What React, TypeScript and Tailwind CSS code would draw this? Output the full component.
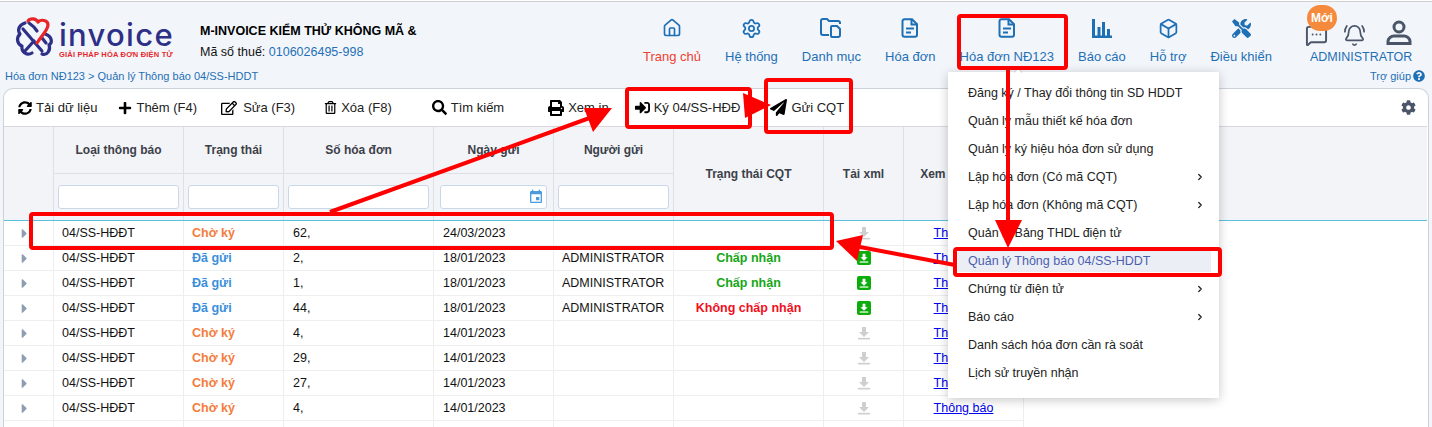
import React from "react";
import { Home, Settings, Box, MessageSquareMore, BellRing, ChevronRight } from "lucide-react";
import { FaSyncAlt, FaPlus, FaRegEdit, FaRegTrashAlt, FaSearch, FaPrint, FaSignInAlt, FaPaperPlane, FaCog, FaTools, FaQuestionCircle, FaCaretRight } from "react-icons/fa";
import { MdEvent } from "react-icons/md";

function FileIcon() {
  return (
    <svg width="18" height="20" viewBox="0 0 18 20" fill="none" stroke="currentColor" strokeWidth="2">
      <path d="M3.5 1.2h7.5l5 5v10.6a2 2 0 0 1-2 2H3.500a2 2 0 0 1-2-2V3.200a2 2 0 0 1 2-2z" />
      <path d="M10.500 1.500v5h5.200M5 10.500h8M5 14.500h5" />
    </svg>
  );
}
function FolderIcon() {
  return (
    <svg width="22" height="20" viewBox="0 0 22 20" fill="none" stroke="currentColor" strokeWidth="2">
      <path d="M9 17H3a2 2 0 0 1-2-2V3a2 2 0 0 1 2-2h4l2 2h9a2 2 0 0 1 2 2v1" />
      <path d="M12 8h5l3 3v6a2 2 0 0 1-2 2h-6a1 1 0 0 1-1-1V9a1 1 0 0 1 1-1z" />
    </svg>
  );
}
function BarsIcon() {
  return (
    <svg width="20" height="19" viewBox="0 0 20 19" fill="currentColor">
      <rect x="0" y="0" width="3" height="19" />
      <rect x="0" y="16.500" width="20" height="2.500" />
      <rect x="5.500" y="8" width="3" height="9" />
      <rect x="10" y="3" width="3" height="14" />
      <rect x="15" y="10" width="3" height="7" />
    </svg>
  );
}
function UserIcon() {
  return (
    <svg width="26" height="25" viewBox="0 0 26 25" fill="none" stroke="currentColor" strokeWidth="3">
      <circle cx="13" cy="7" r="5" />
      <path d="M2 23.500v-2c0-3 3-5.500 6-5.500h10c3 0 6 2.500 6 5.500v2z" />
    </svg>
  );
}
function DownGlyph({ size = 14 }: { size?: number }) {
  return (
    <svg width={size} height={size} viewBox="0 0 14 14" fill="currentColor">
      <path d="M5 1h4v5h3l-5 5-5-5h3z" />
      <rect x="1" y="11.800" width="12" height="1.700" />
    </svg>
  );
}
function Logo() {
  return (
    <svg width="42" height="44" viewBox="0 0 42 44" fill="none" strokeWidth="3.2" strokeLinecap="round" strokeLinejoin="round">
      <g stroke="#2e2f86">
        <path d="M10 7C4 9 2 14 5 18C1 22 2 28 7 30C6 36 12 40 17 37" />
        <path d="M8 13L27 35" />
        <path d="M19 25L9 36" />
        <path d="M14 7C17 9 20 12 22 15" />
        <path d="M30 18C37 20 38 27 34 29C36 34 32 40 27 38" />
        <path d="M27 22L31 27" />
      </g>
      <path stroke="#e8262a" d="M13 5C15 2 21 2 23 6C26 3 33 4 33 9C33 14 27 19 22 27" />
    </svg>
  );
}

const navItems = [
  { label: "Trang chủ", icon: <Home size={20} strokeWidth={2} />, labelClass: "text-[#f0402f]" },
  { label: "Hệ thống", icon: <Settings size={21} strokeWidth={2} />, labelClass: "" },
  { label: "Danh mục", icon: <FolderIcon />, labelClass: "" },
  { label: "Hóa đơn", icon: <FileIcon />, labelClass: "" },
  { label: "Hóa đơn NĐ123", icon: <FileIcon />, labelClass: "" },
  { label: "Báo cáo", icon: <BarsIcon />, labelClass: "" },
  { label: "Hỗ trợ", icon: <Box size={21} strokeWidth={2} />, labelClass: "" },
  { label: "Điều khiển", icon: <FaTools size={19} />, labelClass: "" },
];

const tools = [
  { label: "Tải dữ liệu", icon: <FaSyncAlt size={14} />, cls: "ml-[14px] gap-[4px]" },
  { label: "Thêm (F4)", icon: <FaPlus size={14} />, cls: "ml-[21px] gap-[4px]" },
  { label: "Sửa (F3)", icon: <FaRegEdit size={16} />, cls: "ml-[24px] gap-[6px]" },
  { label: "Xóa (F8)", icon: <FaRegTrashAlt size={13} />, cls: "ml-[29px] gap-[4px]" },
  { label: "Tìm kiếm", icon: <FaSearch size={15} />, cls: "ml-[40px] gap-[4px]" },
  { label: "Xem in", icon: <FaPrint size={16} />, cls: "ml-[44px] gap-[4px]" },
  { label: "Ký 04/SS-HĐĐ", icon: <FaSignInAlt size={15} />, cls: "ml-[26px] gap-[4px]" },
  { label: "Gửi CQT", icon: <FaPaperPlane size={17} />, cls: "ml-[30px] gap-[4px]" },
];

const rows = [
  ["Chờ ký", "62,", "24/03/2023", "", "", false],
  ["Đã gửi", "2,", "18/01/2023", "ADMINISTRATOR", "Chấp nhận", true],
  ["Đã gửi", "1,", "18/01/2023", "ADMINISTRATOR", "Chấp nhận", true],
  ["Đã gửi", "44,", "18/01/2023", "ADMINISTRATOR", "Không chấp nhận", true],
  ["Chờ ký", "4,", "14/01/2023", "", "", false],
  ["Chờ ký", "29,", "14/01/2023", "", "", false],
  ["Chờ ký", "27,", "14/01/2023", "", "", false],
  ["Chờ ký", "4,", "14/01/2023", "", "", false],
] as const;

const menu = [
  ["Đăng ký / Thay đổi thông tin SD HDDT", false],
  ["Quản lý mẫu thiết kế hóa đơn", false],
  ["Quản lý ký hiệu hóa đơn sử dụng", false],
  ["Lập hóa đơn (Có mã CQT)", true],
  ["Lập hóa đơn (Không mã CQT)", true],
  ["Quản lý Bảng THDL điện tử", false],
  ["Quản lý Thông báo 04/SS-HDDT", false],
  ["Chứng từ điện tử", true],
  ["Báo cáo", true],
  ["Danh sách hóa đơn cần rà soát", false],
  ["Lịch sử truyền nhận", false],
] as const;

const gridCols = "grid grid-cols-[50px_130px_100px_150px_120px_120px_150px_80px_120px_1fr]";
const headCell = "border-r border-[#dde0e6] flex items-center justify-center font-bold text-[12px] text-[#3c4048]";
const filterCell = "border-r border-[#dde0e6] flex items-center";
const inputCls = "w-full h-[24px] bg-white border border-[#c9d8e8] rounded-[3px]";
const bodyCell = "border-r border-b border-[#eeeeee] flex items-center";

export default function App() {
  return (
    <div className="relative w-[1432px] h-[427px] overflow-hidden bg-[#f2f6fb] text-[12.5px] text-[#111] font-['Liberation_Sans',Arial,sans-serif]">
      <div className="h-[1px] bg-white" />
      <div className="h-[1px] bg-[#cfcfcf]" />

      {/* Header */}
      <header className="relative h-[86px] flex">
        <div className="w-[200px] shrink-0 pl-[15px] pt-[14px] flex items-start">
          <Logo />
          <div className="ml-[2px] mt-[4px] flex flex-col items-start">
            <span className="text-[31px] leading-[29px] tracking-[1.3px] font-medium text-[#2e2f86] font-['Inter',sans-serif]">invoice</span>
            <span className="mt-[1px] text-[7.5px] leading-[9px] font-bold tracking-[0.2px] text-[#e8262a] whitespace-nowrap">GIẢI PHÁP HÓA ĐƠN ĐIỆN TỬ</span>
          </div>
        </div>
        <div className="pt-[21px] flex flex-col gap-[5px]">
          <div className="font-bold text-[12.5px] leading-[16px] text-black whitespace-nowrap">M-INVOICE KIỂM THỬ KHÔNG MÃ &amp;</div>
          <div className="leading-[16px] whitespace-nowrap">Mã số thuế: <span className="text-[#1f70b8]">0106026495-998</span></div>
        </div>
        <nav className="absolute left-[643px] top-[15px] flex gap-[24px] text-[13px] text-[#1f6fb5]">
          {navItems.map((n) => (
            <div key={n.label} className="flex flex-col items-center">
              <div className="h-[22px] flex items-center justify-center">{n.icon}</div>
              <div className={`mt-[10px] leading-[16px] whitespace-nowrap ${n.labelClass}`}>{n.label}</div>
            </div>
          ))}
        </nav>
        <div className="absolute left-[1305px] top-[16px] w-[115px] flex items-center text-[#4a5568]">
          <MessageSquareMore size={23} strokeWidth={2} className="mt-[6px]" />
          <BellRing size={23} strokeWidth={1.8} className="ml-[15px] mt-[5px]" />
          <div className="ml-[20px]"><UserIcon /></div>
        </div>
        <span className="absolute left-[1307px] top-[3px] w-[30px] h-[26px] rounded-full bg-[#f58a3c] text-white font-bold text-[12px] flex items-center justify-center">Mới</span>
        <div className="absolute left-[1310px] top-[47px] text-[#1f6fb5] leading-[16px]">ADMINISTRATOR</div>
        <div className="absolute left-[5px] top-[67px] text-[11px] leading-[14px] text-[#1f6fb5] whitespace-nowrap">Hóa đơn NĐ123 &gt; Quản lý Thông báo 04/SS-HDDT</div>
        <div className="absolute left-[1370px] top-[67px] text-[11px] leading-[14px] text-[#1f6fb5] flex items-center gap-[2px]">
          Trợ giúp <FaQuestionCircle size={12} />
        </div>
      </header>

      {/* Card */}
      <section className="mx-[3px] h-[340px] bg-white rounded-t-[10px] border border-[#cdd2da] border-b-0 overflow-hidden pr-[1px]">
        <div className="h-[38px] flex items-center border-b border-[#d8d8dc] text-[13px] text-[#222]">
          {tools.map((t) => (
            <div key={t.label} className={`flex items-center whitespace-nowrap ${t.cls}`}>
              <span className="text-black">{t.icon}</span>
              <span>{t.label}</span>
            </div>
          ))}
          <FaCog size={15} className="ml-auto mr-[11px] text-[#4a5568]" />
        </div>

        <div className={`${gridCols} grid-rows-[47px_46px] bg-[#f2f4f8] border-b border-[#5bc0de]`}>
          <div className="row-span-2 border-r border-[#dde0e6]" />
          <div className={`${headCell} border-b`}>Loại thông báo</div>
          <div className={`${headCell} border-b`}>Trạng thái</div>
          <div className={`${headCell} border-b`}>Số hóa đơn</div>
          <div className={`${headCell} border-b`}>Ngày gửi</div>
          <div className={`${headCell} border-b`}>Người gửi</div>
          <div className={`${headCell} row-span-2`}>Trạng thái CQT</div>
          <div className={`${headCell} row-span-2`}>Tải xml</div>
          <div className={`${headCell} row-span-2`}>Xem thông báo</div>
          <div className="row-span-2" />
          <div className={`${filterCell} px-[4px]`}><input className={inputCls} /></div>
          <div className={`${filterCell} px-[4px]`}><input className={inputCls} /></div>
          <div className={`${filterCell} px-[4px]`}><input className={inputCls} /></div>
          <div className={`${filterCell} px-[6px]`}>
            <div className={`${inputCls} flex items-center justify-end pr-[2px] text-[#4a9be0]`}><MdEvent size={16} /></div>
          </div>
          <div className={`${filterCell} px-[4px]`}><input className={inputCls} /></div>
        </div>

        {rows.map((r, i) => (
          <div key={i} className={`${gridCols} h-[25px]`}>
            <div className={`${bodyCell} pl-[13px] text-[#8f9db3]`}><FaCaretRight size={15} /></div>
            <div className={`${bodyCell} pl-[8px]`}>04/SS-HĐĐT</div>
            <div className={`${bodyCell} pl-[8px] font-bold ${r[0] === "Chờ ký" ? "text-[#f47c3c]" : "text-[#3b8fdb]"}`}>{r[0]}</div>
            <div className={`${bodyCell} pl-[9px]`}>{r[1]}</div>
            <div className={`${bodyCell} pl-[9px]`}>{r[2]}</div>
            <div className={`${bodyCell} pl-[8px]`}>{r[3]}</div>
            <div className={`${bodyCell} justify-center font-bold ${r[4] === "Chấp nhận" ? "text-[#16a616]" : "text-[#f0101c]"}`}>{r[4]}</div>
            <div className={`${bodyCell} justify-center`}>
              {r[5] ? (
                <span className="w-[14px] h-[14px] rounded-[2px] bg-[#0aad0a] text-white flex items-center justify-center"><DownGlyph size={10} /></span>
              ) : (
                <span className="text-[#cfcfcf]"><DownGlyph /></span>
              )}
            </div>
            <div className={`${bodyCell} justify-center`}><span className="underline text-[#0000ee]">Thông báo</span></div>
          </div>
        ))}
        <div className={`${gridCols} h-[25px]`}>
          {Array.from({ length: 9 }).map((_, i) => <div key={i} className={bodyCell} />)}
        </div>
      </section>

      {/* Dropdown */}
      <div className="absolute left-[948px] top-[72px] w-[271px] h-[326px] bg-white shadow-[0_2px_10px_rgba(0,0,0,0.22)] pt-[7px]">
        <span className="absolute left-[67px] top-[-3px] w-[6px] h-[6px] rotate-45 bg-white border-l border-t border-[#c8c8c8]" />
        {menu.map(([label, sub], i) => (
          <div key={label} className="relative h-[28px] flex items-center pl-[20px]">
            {i === 6 && <span className="absolute left-[10px] top-[1px] w-[253px] h-[24px] bg-[#eceef5]" />}
            <span className={`relative whitespace-nowrap ${i === 6 ? "text-[#4a5fb0]" : "text-[#222]"}`}>{label}</span>
            {sub && <ChevronRight size={10} strokeWidth={3} className="absolute left-[247px] text-[#222]" />}
          </div>
        ))}
      </div>

      {/* Red annotations */}
      <svg className="absolute left-0 top-0 pointer-events-none" width="1432" height="427" fill="none" stroke="#ff0000" strokeWidth="4" strokeLinejoin="round">
        <rect x="959" y="16" width="107" height="52" rx="2" />
        <rect x="627" y="89" width="123" height="38" rx="2" />
        <rect x="766" y="80" width="85" height="52" rx="2" />
        <rect x="31" y="214" width="801" height="34" rx="2" />
        <rect x="955" y="249" width="265" height="26" rx="2" />
        <path d="M1008 68V225" />
        <path d="M860 247L955 265" />
        <path d="M330 212L595 116" />
        <g fill="#ff0000" stroke="none">
          <polygon points="995,220 1022,220 1008,248" />
          <polygon points="836,241 863,235 857,261" />
          <polygon points="612,108 584,108 593,132" />
          <polygon points="743,93 771,105 745,118" />
        </g>
      </svg>
    </div>
  );
}
